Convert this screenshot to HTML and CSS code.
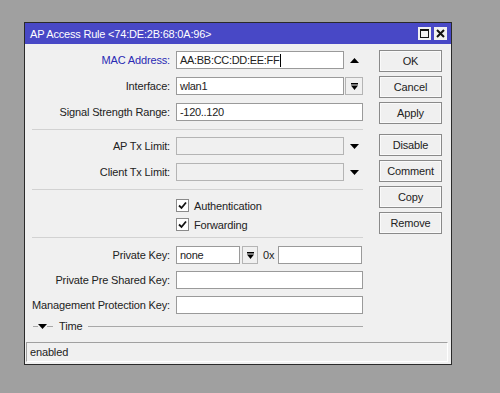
FILE: index.html
```html
<!DOCTYPE html>
<html lang="en">

<head>
	<meta charset="UTF-8">
	<title>AP Access Rule</title>
	<link rel="stylesheet" href="styles.css">
</head>

<body>
	<div class="window">
		<div class="titlebar">
			<span class="title">AP Access Rule &lt;74:DE:2B:68:0A:96&gt;</span>
			<span class="tbtns">
				<span class="tbtn">
					<svg width="9" height="9" viewBox="0 0 9 9"><rect x="0.5" y="0.5" width="8" height="8" fill="none" stroke="#111" /><rect x="0" y="0" width="9" height="2" fill="#111" /></svg>
				</span>
				<span class="tbtn">
					<svg width="9" height="9" viewBox="0 0 9 9"><path d="M1 1 L8 8 M8 1 L1 8" stroke="#111" stroke-width="2" fill="none" /></svg>
				</span>
			</span>
		</div>
		<div class="main">
			<div class="form">
				<div class="row">
					<span class="label blue">MAC Address:</span>
					<span class="input short">AA:BB:CC:DD:EE:FF<i class="caret"></i></span>
					<span class="arrow"><svg width="9" height="5" viewBox="0 0 9 5"><path d="M0 5 L4.5 0 L9 5Z" /></svg></span>
				</div>
				<div class="row">
					<span class="label">Interface:</span>
					<span class="input short">wlan1</span>
					<span class="dd"><svg width="7" height="7" viewBox="0 0 7 7"><rect x="0" y="0" width="7" height="1.5" /><path d="M0 2.5 H7 L3.5 7Z" /></svg></span>
				</div>
				<div class="row">
					<span class="label">Signal Strength Range:</span>
					<span class="input full">-120..120</span>
				</div>
				<div class="sep"></div>
				<div class="row">
					<span class="label">AP Tx Limit:</span>
					<span class="input short off"></span>
					<span class="arrow"><svg width="9" height="5" viewBox="0 0 9 5"><path d="M0 0 L9 0 L4.5 5Z" /></svg></span>
				</div>
				<div class="row">
					<span class="label">Client Tx Limit:</span>
					<span class="input short off"></span>
					<span class="arrow"><svg width="9" height="5" viewBox="0 0 9 5"><path d="M0 0 L9 0 L4.5 5Z" /></svg></span>
				</div>
				<div class="sep sep2"></div>
				<div class="checks">
					<div class="check">
						<span class="box"><svg width="11" height="11" viewBox="0 0 11 11"><path d="M2 5.5 L4.5 8 L9 2.5" stroke="#111" stroke-width="1.8" fill="none" /></svg></span>
						Authentication
					</div>
					<div class="check">
						<span class="box"><svg width="11" height="11" viewBox="0 0 11 11"><path d="M2 5.5 L4.5 8 L9 2.5" stroke="#111" stroke-width="1.8" fill="none" /></svg></span>
						Forwarding
					</div>
				</div>
				<div class="sep sep3"></div>
				<div class="row tight">
					<span class="label">Private Key:</span>
					<span class="input key">none</span>
					<span class="dd small"><svg width="7" height="7" viewBox="0 0 7 7"><rect x="0" y="0" width="7" height="1.5" /><path d="M0 2.5 H7 L3.5 7Z" /></svg></span>
					<span class="hex">0x</span>
					<span class="input hexin"></span>
				</div>
				<div class="row tight">
					<span class="label">Private Pre Shared Key:</span>
					<span class="input full"></span>
				</div>
				<div class="row tight">
					<span class="label">Management Protection Key:</span>
					<span class="input full"></span>
				</div>
				<div class="time">
					<span class="dash"></span>
					<svg width="9" height="5" viewBox="0 0 9 5"><path d="M0 0 L9 0 L4.5 5Z" /></svg>
					<span class="dash dash2"></span>
					<span class="ttext">Time</span>
					<span class="tline"></span>
				</div>
			</div>
			<div class="buttons">
				<span class="btn">OK</span>
				<span class="btn">Cancel</span>
				<span class="btn">Apply</span>
				<span class="btn gap">Disable</span>
				<span class="btn">Comment</span>
				<span class="btn">Copy</span>
				<span class="btn">Remove</span>
			</div>
		</div>
		<div class="status">enabled</div>
	</div>
</body>

</html>
```

FILE: styles.css
```css
body {
	margin: 0;
	background: #a0a0a0;
	font: 11px 'Liberation Sans', Arial, sans-serif;
	letter-spacing: -0.15px;
	color: #222;
}

.window {
	margin: 22px 0 0 24px;
	width: 428px;
	height: 343px;
	box-sizing: border-box;
	border: 1px solid #2a2a2a;
	background: #f0f0f0;
	display: flex;
	flex-direction: column;
}

.titlebar {
	height: 21px;
	background: #4848c6;
	color: #fff;
	display: flex;
	align-items: center;
	padding: 0 4px 0 5px;
}

.title {
	flex: 1;
	font-size: 11px;
	letter-spacing: -0.2px;
}

.tbtns {
	display: flex;
	gap: 3px;
}

.tbtn {
	width: 13px;
	height: 13px;
	background: #f0f0f0;
	display: flex;
	align-items: center;
	justify-content: center;
}

.main {
	flex: 1;
	display: flex;
}

.form {
	width: 331px;
	padding: 7px 0 0 7px;
}

.row {
	display: flex;
	align-items: center;
	height: 18px;
	margin-bottom: 8px;
}

.row.tight {
	margin-bottom: 7px;
}

.label {
	width: 138px;
	margin-right: 6px;
	text-align: right;
	white-space: nowrap;
}

.blue {
	color: #2a2ab4;
}

.input {
	height: 18px;
	box-sizing: border-box;
	border: 1px solid #9a9a9a;
	background: #fff;
	padding-left: 3px;
	display: flex;
	align-items: center;
	white-space: nowrap;
	letter-spacing: -0.3px;
}

.short {
	width: 168px;
}

.full {
	width: 187px;
}

.off {
	background: #f0f0f0;
	border-color: #b4b4b4;
}

.caret {
	display: inline-block;
	width: 1px;
	height: 13px;
	background: #000;
	margin-left: 1px;
}

.arrow {
	margin-left: 6px;
	display: flex;
}

.dd {
	width: 18px;
	height: 18px;
	box-sizing: border-box;
	margin-left: 1px;
	border: 1px solid #b4b4b4;
	display: flex;
	align-items: center;
	justify-content: center;
}

.dd.small {
	width: 16px;
	margin-left: 2px;
}

.key {
	width: 64px;
}

.hex {
	margin: 0 4px 0 5px;
}

.hexin {
	width: 84px;
}

.sep {
	height: 1px;
	background: #d2d2d2;
	margin-bottom: 7px;
}

.sep2 {
	margin-top: 2px;
	margin-bottom: 6px;
}

.sep3 {
	margin-top: 3px;
	margin-bottom: 8px;
}

.check {
	display: flex;
	align-items: center;
	height: 19px;
	margin-left: 144px;
}

.box {
	width: 13px;
	height: 13px;
	box-sizing: border-box;
	border: 1px solid #8a8a8a;
	background: #fff;
	margin-right: 5px;
	display: flex;
	align-items: center;
	justify-content: center;
}

.time {
	display: flex;
	align-items: center;
	height: 10px;
	margin-left: 1px;
}

.dash {
	width: 5px;
	height: 1px;
	background: #a8a8a8;
}

.dash2 {
	width: 6px;
}

.ttext {
	margin: 0 6px;
}

.tline {
	flex: 1;
	height: 1px;
	background: #a8a8a8;
}

.buttons {
	width: 63px;
	margin-left: 16px;
	padding-top: 6px;
	display: flex;
	flex-direction: column;
	gap: 4px;
}

.btn {
	height: 22px;
	box-sizing: border-box;
	border: 1px solid #8a8a8a;
	box-shadow: inset 0 0 0 1px #fafafa;
	background: #f0f0f0;
	display: flex;
	align-items: center;
	justify-content: center;
}

.btn.gap {
	margin-top: 6px;
}

.status {
	height: 20px;
	box-sizing: border-box;
	margin: 0 3px 2px 1px;
	border-top: 1px solid #a0a0a0;
	border-left: 1px solid #a0a0a0;
	border-bottom: 1px solid #fff;
	border-right: 1px solid #fff;
	padding-left: 3px;
	display: flex;
	align-items: center;
}
```
